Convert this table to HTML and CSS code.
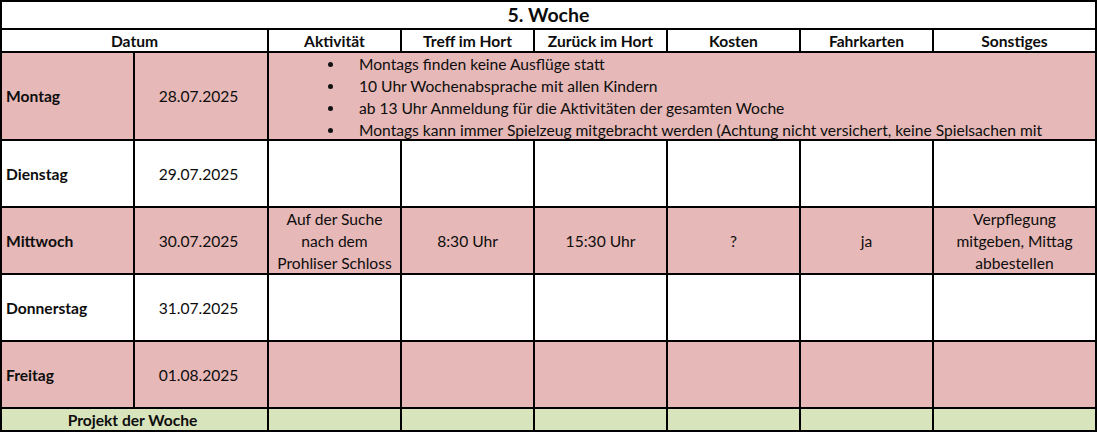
FILE: index.html
```html
<!DOCTYPE html>
<html lang="de">
<head>
<meta charset="utf-8">
<title>5. Woche</title>
<link rel="stylesheet" href="styles.css">
</head>
<body>
<div class="sheet">
  <div class="cell title span-all">5. Woche</div>

  <div class="cell head span-2">Datum</div>
  <div class="cell head">Aktivität</div>
  <div class="cell head">Treff im Hort</div>
  <div class="cell head">Zurück im Hort</div>
  <div class="cell head">Kosten</div>
  <div class="cell head">Fahrkarten</div>
  <div class="cell head">Sonstiges</div>

  <div class="cell day pink">Montag</div>
  <div class="cell date pink">28.07.2025</div>
  <div class="cell notes pink span-6">
    <ul class="bullets">
      <li>Montags finden keine Ausflüge statt</li>
      <li>10 Uhr Wochenabsprache mit allen Kindern</li>
      <li>ab 13 Uhr Anmeldung für die Aktivitäten der gesamten Woche</li>
      <li>Montags kann immer Spielzeug mitgebracht werden (Achtung nicht versichert, keine Spielsachen mit</li>
    </ul>
  </div>

  <div class="cell day">Dienstag</div>
  <div class="cell date">29.07.2025</div>
  <div class="cell"></div>
  <div class="cell"></div>
  <div class="cell"></div>
  <div class="cell"></div>
  <div class="cell"></div>
  <div class="cell"></div>

  <div class="cell day pink">Mittwoch</div>
  <div class="cell date pink">30.07.2025</div>
  <div class="cell center pink">Auf der Suche<br>nach dem<br>Prohliser Schloss</div>
  <div class="cell center pink">8:30 Uhr</div>
  <div class="cell center pink">15:30 Uhr</div>
  <div class="cell center pink">?</div>
  <div class="cell center pink">ja</div>
  <div class="cell center pink">Verpflegung<br>mitgeben, Mittag<br>abbestellen</div>

  <div class="cell day">Donnerstag</div>
  <div class="cell date">31.07.2025</div>
  <div class="cell"></div>
  <div class="cell"></div>
  <div class="cell"></div>
  <div class="cell"></div>
  <div class="cell"></div>
  <div class="cell"></div>

  <div class="cell day pink">Freitag</div>
  <div class="cell date pink">01.08.2025</div>
  <div class="cell pink"></div>
  <div class="cell pink"></div>
  <div class="cell pink"></div>
  <div class="cell pink"></div>
  <div class="cell pink"></div>
  <div class="cell pink"></div>

  <div class="cell head green span-2 project">Projekt der Woche</div>
  <div class="cell green"></div>
  <div class="cell green"></div>
  <div class="cell green"></div>
  <div class="cell green"></div>
  <div class="cell green"></div>
  <div class="cell green"></div>
</div>
</body>
</html>
```

FILE: styles.css
```css
html, body {
  margin: 0;
  padding: 0;
  background: #ffffff;
}

body {
  font-family: "Lato", "Open Sans", sans-serif;
  font-size: 15.6px;
  color: #0d0d0d;
}

.sheet {
  display: grid;
  width: 1097px;
  box-sizing: border-box;
  grid-template-columns: 131px 132px 131px 131px 131px 131px 131px 161px;
  grid-template-rows: 26px 21px 86px 65px 65px 65px 65px 21px;
  gap: 2px;
  padding: 2px;
  background: #000000;
}

.cell {
  background: #ffffff;
  display: flex;
  align-items: center;
  overflow: hidden;
  line-height: 22px;
}

.pink { background: #e6b8b7; }
.green { background: #d8e4bc; }

.span-all { grid-column: 1 / -1; }
.span-2 { grid-column: span 2; }
.span-6 { grid-column: span 6; }

.title {
  justify-content: center;
  font-weight: 700;
  font-size: 19.5px;
}

.head {
  justify-content: center;
  font-weight: 700;
}

.project {
  padding-right: 4px;
}

.day {
  font-weight: 700;
  padding-left: 4px;
}

.date {
  justify-content: center;
  padding-right: 5px;
}

.center {
  justify-content: center;
  text-align: center;
}

.notes {
  align-items: flex-start;
}

.bullets {
  list-style: none;
  margin: 0;
  padding: 0 0 0 90px;
  white-space: nowrap;
}

.bullets li {
  position: relative;
  line-height: 22px;
}

.bullets li::before {
  content: "";
  position: absolute;
  left: -31px;
  top: 9px;
  width: 5px;
  height: 5px;
  border-radius: 50%;
  background: #111111;
}
```
